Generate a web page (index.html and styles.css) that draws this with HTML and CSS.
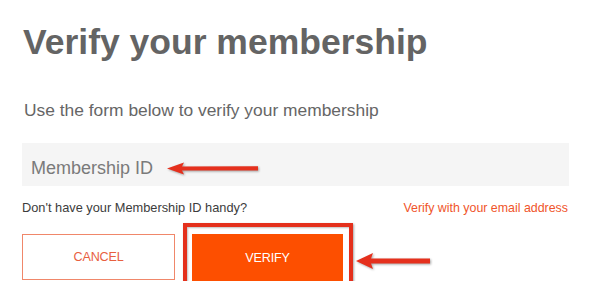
FILE: index.html
```html
<!DOCTYPE html>
<html lang="en">
<head>
<meta charset="utf-8">
<title>Verify your membership</title>
<link rel="stylesheet" href="styles.css">
</head>
<body>
<main class="page">
  <h1 class="title">Verify your membership</h1>
  <p class="lead">Use the form below to verify your membership</p>
  <div class="field">
    <input class="input" type="text" placeholder="Membership ID" aria-label="Membership ID">
    <svg class="arrow arrow-input" width="96" height="16" viewBox="0 0 96 16" aria-hidden="true">
      <polygon points="2,7.5 19,1.5 17,5.5 93,5.2 93,9.6 17,9.5 19,13.5" />
    </svg>
  </div>
  <div class="help-row">
    <span class="help">Don't have your Membership ID handy?</span>
    <a class="alt-link" href="#">Verify with your email address</a>
  </div>
  <div class="actions">
    <button class="btn btn-cancel" type="button">CANCEL</button>
    <div class="verify-wrap">
      <button class="btn btn-verify" type="button">VERIFY</button>
      <span class="highlight" aria-hidden="true"></span>
    </div>
    <svg class="arrow arrow-verify" width="80" height="20" viewBox="0 0 80 20" aria-hidden="true">
      <polygon points="2,10 19,2 17,7.6 76,7.4 76,12.4 17,12.4 19,18" />
    </svg>
  </div>
</main>
</body>
</html>
```

FILE: styles.css
```css
* { box-sizing: border-box; }

html, body {
  margin: 0;
  padding: 0;
  background: #ffffff;
}

body {
  font-family: "Liberation Sans", Arial, Helvetica, sans-serif;
  color: #666666;
}

.page {
  padding: 22px 31px 0 22px;
}

.title {
  margin: 0;
  font-size: 35.5px;
  line-height: 40px;
  font-weight: bold;
  color: #646464;
  padding-left: 1px;
}

.lead {
  margin: 38px 0 0 2px;
  font-size: 17.4px;
  line-height: 20px;
  color: #666666;
}

.field {
  position: relative;
  margin-top: 23px;
}

.input {
  display: block;
  width: 100%;
  height: 43px;
  margin: 0;
  border: 0;
  outline: none;
  background: #f5f5f5;
  padding: 8px 9px 0;
  font-family: "Liberation Sans", Arial, Helvetica, sans-serif;
  font-size: 18px;
  color: #555555;
}

.input::placeholder {
  color: #7a7a7a;
  opacity: 1;
}

.arrow {
  position: absolute;
  fill: #e5301d;
  filter: drop-shadow(1px 1.5px 1px rgba(0, 0, 0, 0.35));
}

.arrow-input {
  left: 143px;
  top: 18px;
}

.help-row {
  display: flex;
  justify-content: space-between;
  align-items: baseline;
  margin-top: 14px;
  line-height: 15px;
}

.help {
  font-size: 12.8px;
  color: #3c3c3c;
}

.alt-link {
  font-size: 12.4px;
  color: #f0552b;
  text-decoration: none;
  margin-right: 1px;
}

.actions {
  position: relative;
  display: flex;
  align-items: flex-start;
  gap: 17px;
  margin-top: 18px;
}

.btn {
  margin: 0;
  font-family: "Liberation Sans", Arial, Helvetica, sans-serif;
  font-size: 12.6px;
  letter-spacing: -0.2px;
  cursor: pointer;
}

.btn-cancel {
  width: 153px;
  height: 46px;
  background: #ffffff;
  border: 1px solid #f0876a;
  color: #e8603f;
}

.verify-wrap {
  position: relative;
}

.btn-verify {
  display: block;
  width: 151px;
  height: 47px;
  background: #fd4f00;
  border: 0;
  color: #ffffff;
}

.highlight {
  position: absolute;
  left: -9px;
  top: -11px;
  right: -10px;
  bottom: -12px;
  border: 4px solid #e4301c;
  box-shadow: 1px 1px 2px rgba(0, 0, 0, 0.35), inset 1px 1px 2px rgba(0, 0, 0, 0.25);
  pointer-events: none;
}

.arrow-verify {
  left: 332px;
  top: 17px;
}
```
